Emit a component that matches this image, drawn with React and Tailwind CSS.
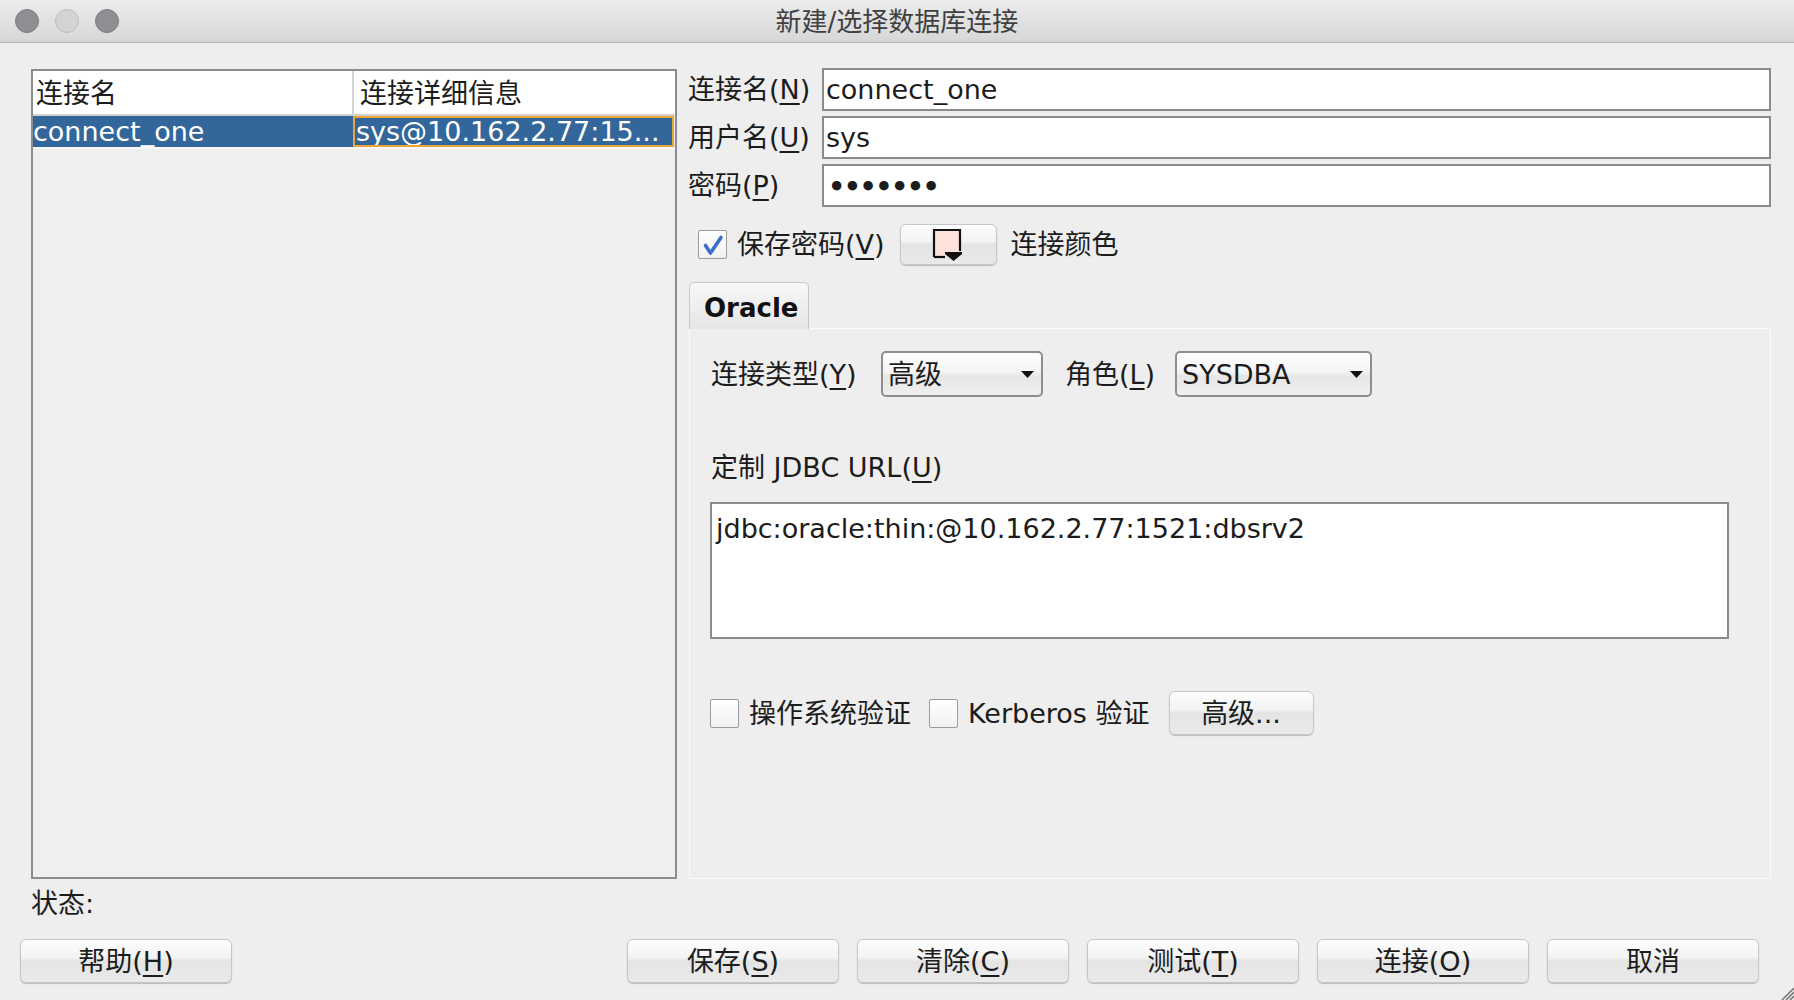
import React from "react";

const U = ({ c }) => (
  <span className="underline decoration-[2px] underline-offset-[4px]">{c}</span>
);

function Btn({ children, className }) {
  return (
    <div
      className={
        "flex items-center justify-center rounded-[6px] border border-[#c6c6c6] bg-[linear-gradient(to_bottom,#fdfdfd_0%,#f3f3f3_42%,#e4e4e4_50%,#eaeaea_100%)] shadow-[0_1px_1px_rgba(0,0,0,0.22)] text-[27px] leading-none text-[#1c1c1c] " +
        className
      }
    >
      {children}
    </div>
  );
}

function Check({ checked }) {
  return (
    <div className="flex h-[29px] w-[29px] shrink-0 items-center justify-center rounded-[2px] border border-[#9c9c9c] bg-[linear-gradient(to_bottom,#ffffff,#f1f1f1)]">
      {checked && (
        <svg width="22" height="22" viewBox="0 0 22 22">
          <path
            d="M3.5 11.5 L8.5 19 L19 3.5"
            stroke="#3b6fce"
            strokeWidth="3.6"
            fill="none"
            strokeLinecap="round"
            strokeLinejoin="round"
          />
        </svg>
      )}
    </div>
  );
}

function Combo({ text, className }) {
  return (
    <div
      className={
        "flex h-[46px] items-center justify-between rounded-[5px] border-2 border-[#8e8e8e] bg-[linear-gradient(to_bottom,#ffffff_0%,#f4f4f4_45%,#e6e6e6_55%,#efefef_100%)] pl-[5px] pr-[7px] " +
        className
      }
    >
      <span className="leading-none">{text}</span>
      <svg width="13" height="7" viewBox="0 0 13 7">
        <polygon points="0,0 13,0 6.5,7" fill="#111" />
      </svg>
    </div>
  );
}

function Field({ label, children }) {
  return (
    <div className="flex h-[43px] items-center">
      <div className="w-[134px] leading-none">{label}</div>
      <div className="flex h-[43px] w-[949px] items-center border-2 border-[#8a8a8a] bg-white pl-[2px] leading-none">
        {children}
      </div>
    </div>
  );
}

export default function App() {
  return (
    <div className="relative flex h-[1000px] w-[1794px] flex-col overflow-hidden bg-[#eeeeee] font-['DejaVu_Sans','Noto_Sans_CJK_SC',sans-serif] text-[27px] text-[#1c1c1c]">
      {/* Title bar */}
      <div className="grid h-[43px] shrink-0 grid-cols-[1fr_auto_1fr] items-center border-b border-[#b3b3b3] bg-[linear-gradient(to_bottom,#ececec,#d7d7d7)]">
        <div className="flex items-center gap-[16px] pl-[15px]">
          <div className="h-[24px] w-[24px] rounded-full border border-[#7d7d80] bg-[#8f8f93]" />
          <div className="h-[24px] w-[24px] rounded-full border border-[#bdbdbd] bg-[#d4d4d4]" />
          <div className="h-[24px] w-[24px] rounded-full border border-[#7d7d80] bg-[#8f8f93]" />
        </div>
        <div className="pt-[2px] text-[26px] leading-none text-[#404040]">新建/选择数据库连接</div>
        <div />
      </div>

      {/* Main */}
      <div className="flex h-[836px] shrink-0 pl-[31px] pr-[23px] pt-[25px]">
        {/* Table */}
        <div className="mt-[1px] flex h-[810px] w-[646px] shrink-0 flex-col border-2 border-[#8c8c8c] bg-[#efefef]">
          <div className="flex h-[45px] shrink-0 border-b-2 border-[#d2d2d2] bg-white">
            <div className="flex w-[319px] items-center pl-[3px] pt-[2px] leading-none">连接名</div>
            <div className="w-[2px] bg-[#d6d6d6]" />
            <div className="flex flex-1 items-center pl-[6px] pt-[2px] leading-none">连接详细信息</div>
          </div>
          <div className="flex h-[31px] shrink-0 text-white">
            <div className="flex w-[320px] items-center overflow-hidden whitespace-nowrap bg-[#33669a] pl-[0px] leading-none">
              connect_one
            </div>
            <div className="flex w-[321px] items-center overflow-hidden whitespace-nowrap border-2 border-[#e9a53a] bg-[#33669a] pl-[1px] leading-none">
              sys@10.162.2.77:15...
            </div>
          </div>
          <div className="h-[2px] bg-[#f7f7f7]" />
        </div>

        {/* Right side */}
        <div className="ml-[11px] flex w-[1083px] flex-col">
          <div className="flex flex-col gap-[5px]">
            <Field
              label={
                <>
                  连接名(<U c="N" />)
                </>
              }
            >
              connect_one
            </Field>
            <Field
              label={
                <>
                  用户名(<U c="U" />)
                </>
              }
            >
              sys
            </Field>
            <Field
              label={
                <>
                  密码(<U c="P" />)
                </>
              }
            >
              <span className="pl-[2px] pt-[2px] font-bold tracking-[-1.5px]">•••••••</span>
            </Field>
          </div>

          {/* Save password row */}
          <div className="mt-[17px] flex h-[41px] items-center pl-[10px]">
            <Check checked />
            <span className="ml-[10px] leading-none">
              保存密码(<U c="V" />)
            </span>
            <Btn className="ml-[15px] h-[41px] w-[97px]">
              <svg width="32" height="34" viewBox="0 0 32 34">
                <rect x="2" y="2" width="26" height="27" fill="#fde1db" />
                <path d="M2 29 V2 H28 V23" stroke="#111" strokeWidth="2.2" fill="none" />
                <path d="M2 29 H13" stroke="#111" strokeWidth="2.2" fill="none" />
                <polygon points="13,24 30,24 30,26 21.5,33 13,26" fill="#111" />
              </svg>
            </Btn>
            <span className="ml-[14px] leading-none">连接颜色</span>
          </div>

          {/* Tab header */}
          <div className="relative z-10 mt-[17px] -mb-[1px] ml-[1px] flex h-[47px] w-[120px] items-center rounded-t-[5px] border border-b-0 border-[#c8c8c8] bg-[linear-gradient(to_bottom,#f7f7f7,#e6e6e6)] pl-[14px] pt-[4px] text-[26px] font-bold leading-none text-[#111]">
            Oracle
          </div>

          {/* Tab panel */}
          <div className="ml-[1px] flex h-[551px] w-[1082px] flex-col border border-[#fbfbfb] pl-[21px] pt-[22px]">
            <div className="flex h-[46px] items-center">
              <div className="w-[170px] leading-none">
                连接类型(<U c="Y" />)
              </div>
              <Combo text="高级" className="w-[162px]" />
              <div className="ml-[22px] w-[110px] leading-none">
                角色(<U c="L" />)
              </div>
              <Combo text="SYSDBA" className="w-[197px]" />
            </div>

            <div className="mt-[52px] flex h-[36px] items-center leading-none">
              定制 JDBC URL(<U c="U" />)
            </div>

            <div className="-ml-[1px] mt-[17px] h-[137px] w-[1019px] border-2 border-[#8a8a8a] bg-white pl-[4px] pt-[7px] leading-[36px]">
              jdbc:oracle:thin:@10.162.2.77:1521:dbsrv2
            </div>

            <div className="-ml-[1px] mt-[52px] flex h-[44px] items-center">
              <Check />
              <span className="ml-[10px] leading-none">操作系统验证</span>
              <div className="ml-[18px]">
                <Check />
              </div>
              <span className="ml-[10px] leading-none">Kerberos 验证</span>
              <Btn className="ml-[19px] h-[44px] w-[145px]">高级...</Btn>
            </div>
          </div>
        </div>
      </div>

      {/* Status */}
      <div className="mt-[6px] flex h-[36px] shrink-0 items-center pl-[31px] leading-none">状态:</div>

      {/* Buttons */}
      <div className="mt-[18px] flex h-[44px] shrink-0 pl-[20px]">
        <Btn className="h-[44px] w-[212px]">
          帮助(<U c="H" />)
        </Btn>
        <div className="ml-[395px] flex gap-[18px]">
          <Btn className="h-[44px] w-[212px]">
            保存(<U c="S" />)
          </Btn>
          <Btn className="h-[44px] w-[212px]">
            清除(<U c="C" />)
          </Btn>
          <Btn className="h-[44px] w-[212px]">
            测试(<U c="T" />)
          </Btn>
          <Btn className="h-[44px] w-[212px]">
            连接(<U c="O" />)
          </Btn>
          <Btn className="h-[44px] w-[212px]">取消</Btn>
        </div>
      </div>

      {/* Resize grip */}
      <svg className="absolute bottom-0 right-0" width="16" height="16" viewBox="0 0 16 16">
        <path d="M4 16 L16 4 M8 16 L16 8 M12 16 L16 12" stroke="#7a7a7a" strokeWidth="1.6" />
      </svg>
    </div>
  );
}
